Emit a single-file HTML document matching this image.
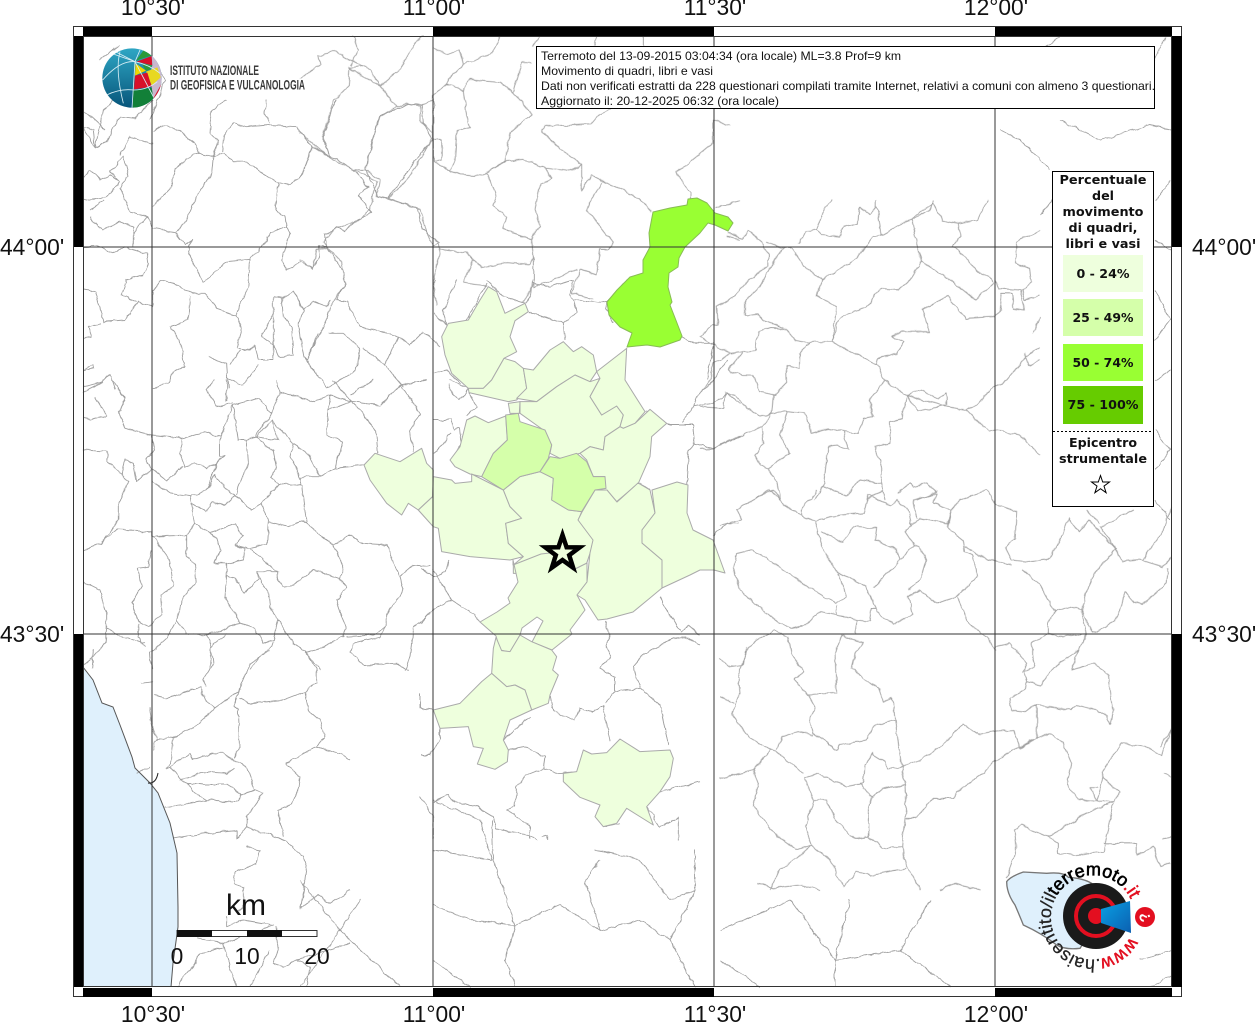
<!DOCTYPE html>
<html lang="it"><head><meta charset="utf-8"><title>Terremoto</title>
<style>html,body{margin:0;padding:0;background:#fff}svg{display:block}text{font-family:"Liberation Sans",sans-serif}.l text{font-family:"DejaVu Sans",sans-serif;font-weight:bold;font-size:12px;fill:#111}</style></head>
<body>
<svg width="1255" height="1024" viewBox="0 0 1255 1024" xmlns="http://www.w3.org/2000/svg">
<defs>
<clipPath id="gc"><circle cx="186" cy="174" r="89"/></clipPath>
<linearGradient id="gb" x1="0" y1="0" x2="0" y2="1"><stop offset="0" stop-color="#2ea6c4"/><stop offset="1" stop-color="#07557a"/></linearGradient>
<linearGradient id="mg" x1="0" y1="0" x2="1" y2="1"><stop offset="0" stop-color="#0aa0e4"/><stop offset="1" stop-color="#0b5fb0"/></linearGradient>
<path id="arc" d="M1130,937 A42,42 0 1 1 1133,905" fill="none"/>
<filter id="wig" filterUnits="userSpaceOnUse" x="0" y="0" width="1255" height="1024" color-interpolation-filters="sRGB">
<feTurbulence type="fractalNoise" baseFrequency=".11" numOctaves="2" seed="4" result="n"/>
<feDisplacementMap in="SourceGraphic" in2="n" scale="4.5" xChannelSelector="R" yChannelSelector="G"/>
<feGaussianBlur stdDeviation=".3"/>
</filter>
<filter id="sft" filterUnits="userSpaceOnUse" x="0" y="0" width="1255" height="1024" color-interpolation-filters="sRGB"><feGaussianBlur stdDeviation=".3"/></filter>
</defs>
<rect width="1255" height="1024" fill="#fff"/>
<polygon points="83,667 93,680 102,703 113,707 120,725 132,757 135,768 150,783 158,793 170,823 177,853 178,907 178,927 173,963 171,987 83,987" fill="#dff0fc"/>
<g fill="none" stroke="#a0a0a0" stroke-width="2.8" stroke-linejoin="round" filter="url(#wig)">
<g transform="translate(70,100) scale(.33333)"><path d="M248,95,285,75,330,95,375,130,388,160,430,170,460,160,490,185,530,185,570,215,625,248,660,255,695,228,725,140,680,80,600,75,530,80,490,70,460,110,455,155M388,160,345,175,315,215,300,265,248,320M430,170,425,220,380,290,345,370,315,395,248,385,232,350,180,335,150,265,175,225,160,170,120,215,150,245,110,290,60,300,42,295M625,248,615,330,645,350,650,380,600,400,575,440,540,478,470,485,400,545,360,470,355,440,368,420,345,435,315,395M650,380,660,400,635,480,650,510,690,485,730,505,750,470,745,437,770,440,765,405,800,380,825,395,850,365,905,340,865,285,895,260,850,210,800,175,780,170,730,140M780,170,760,115,785,30,800,0M770,440,820,515,825,555,800,600,830,605,870,680,960,700,985,710,1020,735,1060,695,1090,720,1110,740M540,478,535,560,500,645,440,625,405,580,370,580,310,550,275,540,248,575,248,620,205,605,165,660,100,665,95,640,75,575,42,570M500,645,515,690,500,745,540,750,555,735,565,780,610,780,610,590,635,595,670,575,700,625,730,605,770,620,780,600M635,595,640,650,665,680,670,765,625,770,610,735,575,710,610,640M670,575,700,630,685,680,700,770,710,780,770,660,780,620M710,780,745,700M775,700,820,700,870,745,860,810,770,865,740,820,700,770M985,710,945,795,880,745M945,795,1000,860M1090,120,1060,70,1055,15,1015,10,980,30,930,45,885,205,925,290,955,295,1040,325,1060,390,1110,430M955,295,1060,150,1090,120M42,230,60,210,90,240,120,225,150,245M75,145,100,30,130,0M75,145,40,80M42,85,70,85,75,145,110,125,150,50,195,55,248,0M150,165,180,110,248,130M60,330,105,300M60,350,95,390,150,365,190,380,190,440M232,350,190,400M42,440,80,437,130,460,160,440,230,460,235,490,220,525,170,540,155,585,200,605M90,670,55,680,65,710,42,715M360,590,355,660,300,680,330,720,345,800,310,815,295,850,250,865M415,770,470,790,475,865M480,795,510,750M565,795,520,855,470,835M42,810,70,795,72,805,42,812M42,860,100,845,120,825,135,870M420,100,425,30,470,0M420,100,445,125,430,170M590,0,585,40,600,70"/></g>
<g transform="translate(700,200) scale(.33333)"><path d="M85,100,130,115,145,92,185,125,205,165,205,195,135,250,105,290,50,320,55,375,40,372,0,410,40,435,95,460,165,450,175,395,215,382,260,390,285,420,330,428,300,460,298,505,258,495,260,550,225,585,180,575,160,525,125,525,85,510,130,455M250,145,215,195,180,260,135,305,135,345,170,340,190,362,250,385M250,145,200,125M250,145,275,145,310,195,365,240,350,285,410,322,395,425,345,425,330,428M365,240,400,220,470,175,520,110,545,105,635,55,655,155,665,185,630,240,595,270,540,265,500,320,430,345,410,375,395,425M295,130,320,95,350,90,365,105,420,110,430,80,475,70,480,20,505,45,530,20,545,105M530,20,530,0M350,90,375,20,395,0M635,55,700,10,725,60,775,70,780,110,755,140,775,150,830,215,875,235,880,250,825,300,760,245,665,185M775,70,830,60,865,0M395,425,530,495,555,540,620,588,740,620,800,630,865,695,885,690,960,705,1020,765M530,495,535,475,590,460,615,425,575,410,610,395,690,395,665,330,740,290,800,355,880,350,900,335,905,280,935,280,940,325,975,330,960,270,895,265,885,240M800,630,830,615,880,560,920,540,980,470,1020,440M975,460,985,495,1020,480M555,540,510,600,520,650,490,655,475,700,430,695,385,685,335,700,315,640,260,635,215,640,220,585M620,588,655,635,740,615,740,580,715,595,660,570,620,588M620,588,605,655,570,665,570,730,525,740,545,800,545,850,480,840,440,885,370,860,385,740,410,735,445,750,430,695M215,640,185,680,130,705,90,720,40,745,0,748M185,680,190,730,165,765,180,795,205,805,270,760,240,705,262,635M215,640,180,650,140,625,105,585,75,578,70,625,0,620M205,805,230,850,240,900M170,895,210,870,240,900M340,900,370,860M545,850,555,900M500,900,550,870M590,880,630,850,640,860,680,850,710,875,650,900M90,460,40,490,30,540,0,580M950,125,945,190,990,205,995,245,965,270,975,300,1020,285M950,125,1020,90M1000,400,1020,350M700,0,690,30,640,55"/></g>
<g transform="translate(720,490) scale(.33333)"><path d="M0,105,65,90,50,60,100,30,160,0,190,45,245,75,285,95,305,170,350,245,440,290,465,350,485,380,520,405,580,370,565,320,600,300,650,340,710,320,770,260,760,195,735,185,730,150,680,110,695,60,720,30,800,0,825,40,890,65,885,150,855,170,875,210,920,215,990,205,1020,150,1045,85,1075,125,1105,90,1185,175,1205,215,1260,210,1330,230,1355,200M100,180,50,190,40,235,60,300,80,320,180,400,215,415,260,405,300,365,350,375,410,390,408,430M100,180,190,240,270,295,345,340,380,320,355,250M350,345,350,375,410,390,450,395,455,355,470,355M285,95,330,80,430,70,445,15,510,45,530,30,565,60,575,105,555,125,575,155,580,165,540,210,460,295M305,125,370,160,400,110,470,115,465,150,530,180,540,210M245,75,245,60,290,0M575,100,600,85,680,100,695,60,640,40,650,10,580,30,590,85M580,165,600,170,620,210,600,270,565,300M710,320,745,400,800,440,825,480M735,170,800,205,875,225M905,235,960,285,1005,365,1050,350,1085,360,1120,430,1185,395,1200,360,1215,305,1240,335,1265,345,1340,280,1345,235M1085,360,1100,300,1130,240,1185,180M1005,365,985,395,985,430,1030,440,1100,430,1085,365M985,430,935,460,935,500,945,530,910,545,920,575,960,585,1000,535,1050,500,1075,480,1100,430M1075,480,1055,540,1120,520,1165,555,1175,630,1180,660,1170,705,1160,680,1130,660,1070,645,1050,660,950,645,915,665,875,660,870,625,915,600,920,575M950,645,950,745,900,775,880,720,825,725,775,735,730,700,660,770,600,810,545,830,500,835,495,815,455,790,435,830,430,880,380,890,345,875,295,850,255,865,280,930,320,930,345,990,405,1045,445,1040,445,960,455,925,420,880M545,830,520,650,515,625,490,635,480,600,395,535,405,490,430,460,365,435,345,490,350,610,265,615,285,650,270,680,280,730,350,780,355,765,440,750,460,710,525,690M265,615,225,570,250,545,215,490,205,440,160,420,85,470,55,560,60,610,35,670,90,745,150,780,100,840,0,865M150,780,170,785,250,850M170,780,185,740,235,725,280,735M100,840,115,880,100,945,150,1020,230,1080,275,1065,255,1010,280,930M455,925,490,895,555,885,545,830M555,885,558,960,545,1070,550,1110,580,1160,600,1200M445,1040,490,1075,545,1070M275,1065,330,1110,370,1190,410,1145,450,1155,560,1135M150,1200,180,1135,230,1105,275,1065M558,985,585,985,640,925,700,925,710,905,790,850,825,810,950,745,990,730,1030,760,1055,820,1040,885,1070,925,1120,935,1180,935,1200,905,1150,865,1145,845,1205,760,1275,770,1325,795,1355,710M0,510,30,530,70,525,80,470M0,620,40,640M825,470,870,460,920,520,905,550M1150,865,1130,935,1110,890,1135,890M1180,935,1080,980,985,1040,1015,1060,1015,1090,1070,1095,1150,1085,1180,940M985,1040,905,1005,885,1020,890,1070,870,1140,860,1165M1150,1060,1250,1060,1250,1095,1300,1070,1320,1130,1350,1120M1330,1045,1355,1040M1355,50,1330,120,1280,190,1270,210M1140,110,1240,60M1140,110,1190,180M1100,60,1140,100M1320,770,1355,710M1330,850,1355,860M115,1180,160,1195,240,1185,300,1200M660,1200,700,1180,780,1200"/></g>
<g transform="translate(80,380) scale(.33333)"><path d="M10,35,70,5M45,50,80,105,30,120,10,115M95,0,135,55,115,95,135,145,215,165,310,175,375,155,420,170,420,230,435,225,410,250,380,265,345,250,315,260,300,220,310,175M215,165,225,210,195,240,215,265,260,300,310,260M10,210,85,215,80,245,125,280,135,240,160,250,170,305,215,265M125,280,145,305,115,380,115,420,65,490,10,510M65,485,110,450,215,455,215,470,320,465,345,430,335,370,330,350,270,340,215,305M330,350,380,330,410,250M335,370,380,395,395,365,435,375,465,345,430,320,405,285,380,330M465,345,515,390,545,370,595,312,665,318,680,430,760,495,810,465,850,490,920,495,960,590,1000,555,1050,560M420,170,460,75,465,120,475,180,500,180,525,170,575,100,535,55,460,75M575,100,600,40,590,0M600,35,700,65,750,45,745,90,740,165,785,185,765,265,720,290,665,290,660,318M750,45,815,65,890,155,895,220,855,255,765,265M460,70,410,80,380,30,400,0M440,0,440,65M500,180,505,245,475,320,470,345M525,170,595,180,575,120,530,170M525,170,580,215,590,265,570,290,595,310M575,120,640,190,630,230,665,300M640,190,680,215,720,290M745,90,810,65,900,75,960,15,1020,100,990,155,1000,215M815,65,760,0M880,0,810,45M960,15,1040,0M345,430,410,475,420,510,405,550,440,550,490,540,495,505,465,495,490,465,465,430,390,460,410,475M470,495,510,505,560,490,565,425,545,370M565,425,625,440,660,425,680,430M510,505,590,575,590,590,610,620,640,615,700,570,780,595,800,620,770,660,785,710,800,745,790,770,730,800,680,815,640,790,595,715,570,680,565,630,545,610,530,575,595,575M530,575,535,600,490,640,480,610,440,585,440,550M440,585,435,650,480,730,525,745,550,790,580,780,595,715M760,495,790,560,780,595M960,590,970,630,920,700,920,740,880,765,800,770M215,465,270,540,280,620,240,645,245,700,210,740,175,725,155,670,185,620,175,565,205,560,215,510M320,465,320,525,345,550,350,605,310,650,290,720,320,760,380,765,480,730M290,720,260,775,210,820,215,870M175,730,175,770,195,800M10,605,60,630,80,700,80,745,125,770,195,790M80,745,75,790,40,830,10,855M380,765,395,800,390,860M395,800,440,760M1000,740,990,830,975,870M1000,740,1050,700M820,790,810,815,850,855,950,850,985,870M675,815,720,870M510,870,540,830,575,800,580,785M820,790,900,770,920,740"/></g>
<g transform="translate(300,36) scale(.33333)"><path d="M400,40,440,55,480,40,490,85,445,130,440,145,490,165,510,130,600,140,640,170,695,235,630,290,615,375,560,410,550,420,480,415,450,405,400,375,400,290,360,255,360,210,400,195M440,145,400,180,400,375M490,165,500,240,510,275,470,285,465,375,450,405M560,410,620,375,670,370,735,395,810,405,845,385,845,465,875,420,905,435,1000,475,1055,525M845,385,780,340,725,285,735,270,870,265,895,235,945,215M735,395,755,430,720,445,705,520,720,570,695,610,610,580,620,545,580,510,590,480,560,410M695,610,700,660,690,685,620,680,545,695,520,670,500,650,420,640,415,620,400,630,380,590,360,520,265,490,330,420,395,310M265,490,230,480,240,430,195,400,160,400,230,435,210,520,180,550,100,580,70,620,80,630,125,680,135,750,90,810M395,310,425,310,425,370,405,375M90,365,70,300,100,195,145,150,150,95,185,90,105,45,55,60,60,85,0,130M145,95,240,150,290,215,320,200,360,210M290,215,240,240,195,400M90,365,160,400M90,365,35,330,5,420M0,290,90,365M240,150,300,100,345,20,370,0M240,150,210,100,185,90M160,0,175,40,150,90M640,170,665,80,695,80M600,0,580,50,490,85M1130,410,1170,470,1170,490M1130,410,1240,320,1240,250M1240,250,1290,270M1245,515,1320,495M860,520,880,480,905,440M860,520,940,620,920,640,900,640,890,715,840,700,815,770,880,790M700,660,700,755,830,700M700,740,670,800M520,670,490,740,560,750M420,640,400,730,410,810M80,635,50,640,40,700,0,670M1280,600,1320,610M700,30,720,0M890,0,885,30M1030,0,1030,30"/></g>
<g transform="translate(70,650) scale(.33333)"><path d="M250,135,290,145,390,110,405,150,435,175,510,120M490,165,510,110,540,40,600,0M435,175,405,205,370,235,310,260,255,272,248,300M310,260,300,340,290,358,360,310,370,330,430,310,460,310,490,330,530,350,555,420,580,430,530,500,530,530,590,550,650,575,700,620,710,650,700,720,690,775,740,735,780,760,840,720M500,145,490,165,505,180,510,290,490,325M510,145,540,160,640,150,705,125,740,100,740,60,705,0M425,0,430,40,400,90,410,110M300,350,330,390,400,365,470,370,495,355M355,400,370,425,410,450,505,455,510,430,470,405,400,405,355,400,330,390M555,420,510,435M410,450,350,460,285,470M650,340,690,380,685,420,665,465,625,480,640,560M650,340,740,290,810,310,840,330M705,125,715,180,750,210,765,260,740,290M310,565,400,550,500,540,500,565,530,530M530,590,570,600,560,640,495,665,490,700,520,710,520,770,500,790M215,100,248,95M470,800,470,830,520,810,610,825M615,830,625,900,610,940,640,950,680,930,720,950,710,1010M680,930,700,925,840,880M460,880,500,1010M460,890,390,910,370,950,330,995,325,1010M380,865,460,880,610,825M240,170,248,230,260,270M240,350,200,370M65,55,70,0"/></g>
<g transform="translate(420,560) scale(.33333)"><path d="M40,30,95,120,165,165,180,185M0,190,35,150,95,120M0,25,40,50,75,35,85,0M40,450,0,445,0,400M60,505,60,540,30,585,0,585M250,540,330,470M265,570,320,560,375,590,370,625,320,645,290,680,285,740,260,750,330,800,330,840M370,625,410,640,470,635M390,405,400,455,465,480,480,445,520,455,550,435,570,545M555,430,585,395,660,385,720,435,745,555M585,395,585,350,540,325,575,290,555,255,570,235,555,180M660,385,640,320,675,280,760,235,795,230,840,255M780,220,805,195,840,225M720,110,780,215M0,710,40,770,40,840M40,725,85,705,105,725,170,740,220,770,230,810,310,820,350,840M365,830,380,825,380,840M680,740,720,800,775,770,775,840M720,695,840,665M550,800,600,790"/></g>
<g transform="translate(360,280) scale(.33333)"><path d="M220,100,260,135,250,95,290,0M225,0,220,35M380,10,320,120M380,0,430,50,500,70,510,45,515,0M515,10,570,20,640,0M505,95,610,130,650,95,640,60,630,40,640,0M640,60,720,70,740,65M610,130,615,180M760,130,740,90,740,65,770,35,800,0M270,300,325,325,300,360,280,345,265,310M325,338,350,380,320,410M220,280,260,270,300,310M220,420,275,420,280,450,300,445,305,480,280,540M270,460,245,500,220,520M965,170,1000,190,1060,190M855,395,925,435,1000,435,1005,490,985,510,980,615M1000,490,1060,505,1140,470M965,430,1000,380,1060,370,1100,340,1140,370M1000,380,1010,350,1060,300,1100,240M1060,200,1040,300M840,610,870,630M1060,765,1100,730,1140,730"/></g>
<path stroke-width=".9" d="M1000,80,1040,50,1060,37M1165,37,1150,70M1060,120,1100,140,1150,125,1171,130M1020,140,1050,170M1040,215,1052,200M1155,200,1171,180M1155,240,1171,250M1155,290,1170,320,1155,340M1155,380,1171,370M1155,430,1170,450,1155,470M1155,500,1171,520M1000,130,1020,140M492,820,493,860,515,925,505,960,515,987M595,850,640,860,670,900,695,890M515,925,560,905,600,930,640,920,670,940,695,987M600,860,585,880,600,930M695,850,695,890,670,940M433,800,480,820,492,860,433,850M433,905,470,920,515,925M433,960,470,987M720,930,790,900,835,960,835,987M850,900,835,960,900,950,950,987M900,950,930,900M720,960,760,987M300,880,340,930,300,987M360,900,340,930,400,987M250,987,270,950M1140,960,1171,950M1150,987,1171,975M83,110,105,130M120,45,100,60M152,60,165,80,150,120"/>
</g>
<g stroke="#aaa" stroke-width="1" stroke-linejoin="round" filter="url(#sft)">
<g fill="#eeffdd" transform="translate(360,280) scale(.33333)" stroke-width="3">
<polygon points="245,170 265,130 325,120 360,60 385,20 410,35 435,100 495,70 505,95 465,122 450,170 470,215 432,235 395,300 370,325 325,325 275,280 255,225"/>
<polygon points="432,235 465,245 490,265 500,325 470,360 445,365 327,338 325,325 370,325 395,300"/>
<polygon points="490,265 520,270 570,210 610,185 640,215 665,200 700,225 710,275 690,305 645,285 590,320 530,365 470,355 500,325"/>
<polygon points="480,365 530,365 590,320 645,285 690,305 720,295 690,350 725,405 770,378 790,405 780,440 735,470 730,510 690,500 660,520 600,535 570,520 575,495 550,450 480,400"/>
<polygon points="800,205 795,300 855,395 825,430 790,445 780,440 790,405 770,378 725,405 690,350 720,295 710,275"/>
<polygon points="445,370 480,365 478,400 450,400"/>
<polygon points="660,520 690,500 730,510 735,470 780,440 790,445 825,430 870,388 920,430 875,470 870,530 835,610 770,665 740,630 720,630 735,590 700,590 680,540"/>
<polygon points="270,540 300,500 320,420 345,408 385,428 437,408 442,480 400,520 365,590 330,582 285,560"/>
<polygon points="12,555 45,520 120,545 185,505 200,550 220,570 218,650 175,690 145,670 125,705 80,670 30,600"/>
<polygon points="175,690 218,650 220,740"/>
<polygon points="220,590 275,600 285,610 335,605 335,582 430,630 450,680 485,715 437,730 445,790 490,830 450,840 330,830 245,815 235,745 220,740 175,690 218,650"/>
<polygon points="430,630 480,590 540,575 580,595 575,660 625,690 665,695 655,720 700,780 690,820 680,850 680,880 460,880 460,855 490,830 445,790 437,730 485,715 450,680"/>
</g>
<g fill="#eeffdd">
<polygon points="513,560 518,582 508,598 510,603 497,612 480,622 496,636 500,650 510,652 520,635 522,628 537,617 543,621 532,642 552,650 572,634 570,630 585,610 577,595 587,582 587,563 573,570 550,553 541,554 513,565"/>
<polygon points="578,520 582,512 595,490 607,490 617,502 638,483 650,490 655,513 642,530 642,543 662,560 662,588 650,598 633,612 607,619 598,620 585,600 577,595 587,582 590,553 593,540"/>
<polygon points="652,490 677,482 688,485 687,513 693,530 713,540 725,573 714,570 700,570 690,575 662,588 662,560 642,543 642,530 655,513"/>
</g>
<g fill="#eeffdd" transform="translate(420,560) scale(.33333)" stroke-width="3">
<polygon points="228,232 245,272 270,275 300,225 335,245 395,270 410,290 398,330 415,345 390,405 385,430 335,450 315,390 285,375 260,380 215,340 220,265"/>
<polygon points="40,450 120,430 185,365 215,340 260,380 285,375 315,390 335,450 270,480 250,540 265,570 262,605 225,628 172,612 190,565 160,560 145,500 60,505"/>
<polygon points="430,640 470,635 490,570 515,582 560,578 600,537 660,575 750,570 760,595 750,650 720,695 680,740 700,795 620,745 590,790 550,800 525,770 540,735 480,712 430,665"/>
</g>
<g fill="#d5ffaa" transform="translate(360,280) scale(.33333)" stroke-width="3">
<polygon points="437,405 475,400 480,425 555,450 575,495 565,535 540,575 480,590 430,630 365,590 400,520 442,480"/>
<polygon points="540,575 570,530 600,535 650,520 680,545 700,590 735,590 738,625 705,630 665,695 625,690 575,660 580,595"/>
</g>
<polygon fill="#99ff33" stroke="#88bb55" points="653,212 670,208 687,205 688,199 697,198 707,203 715,213 728,217 733,223 728,231 715,225 708,223 700,233 685,247 679,258 678,267 669,273 668,287 672,302 670,305 677,323 682,336 680,340 660,347 647,345 627,347 632,333 620,327 609,315 607,302 617,290 630,277 643,273 643,260 650,247 649,233"/>
</g>
<polyline points="83,667 93,680 102,703 113,707 120,725 132,757 135,768 150,783 158,793 170,823 177,853 178,907 178,927 173,963 171,987" fill="none" stroke="#555" stroke-width="1"/>
<path d="M148,783 Q156,784 158,773" fill="none" stroke="#222" stroke-width="1"/>
<!-- graticule -->
<g stroke="#333" stroke-width="1.2" shape-rendering="crispEdges">
<path d="M152,37V987M433,37V987M714,37V987M995,37V987M83,247H1172M83,634H1172" fill="none"/>
</g>
<!-- frame -->
<rect x="73.5" y="26.5" width="1108" height="970" fill="none" stroke="#333"/>
<rect x="83.5" y="36.5" width="1088" height="950" fill="none" stroke="#333"/>
<g fill="#000">
<rect x="83" y="27" width="69" height="9"/><rect x="433" y="27" width="281" height="9"/><rect x="995" y="27" width="177" height="9"/>
<rect x="83" y="988" width="69" height="9"/><rect x="433" y="988" width="281" height="9"/><rect x="995" y="988" width="177" height="9"/>
<rect x="74" y="36" width="9" height="211"/><rect x="74" y="634" width="9" height="353"/>
<rect x="1172" y="36" width="10" height="211"/><rect x="1172" y="634" width="10" height="353"/>
</g>
<!-- scale -->
<g fill="#111">
<rect x="177" y="930.5" width="140" height="6" fill="#fff" stroke="#333"/>
<rect x="177" y="930" width="35" height="7"/><rect x="247" y="930" width="35" height="7"/>
<text x="246" y="915" font-size="30" text-anchor="middle">km</text>
<text x="177" y="964" font-size="22.8" text-anchor="middle">0</text>
<text x="247" y="964" font-size="22.8" text-anchor="middle">10</text>
<text x="317" y="964" font-size="22.8" text-anchor="middle">20</text>
</g>
<!-- tick labels -->
<g font-size="22.8" fill="#111">
<g text-anchor="middle">
<text x="153" y="15">10°30'</text><text x="434" y="15">11°00'</text><text x="715" y="15">11°30'</text><text x="996" y="15">12°00'</text>
<text x="153" y="1022">10°30'</text><text x="434" y="1022">11°00'</text><text x="715" y="1022">11°30'</text><text x="996" y="1022">12°00'</text>
</g>
<text x="0" y="255">44°00'</text><text x="0" y="642">43°30'</text>
<text x="1192" y="255">44°00'</text><text x="1192" y="642">43°30'</text>
</g>
<!-- star -->
<polygon transform="translate(562.5,553)" points="0,-18 4.1,-5.7 17.1,-5.6 6.7,2.2 10.6,14.6 0,7 -10.6,14.6 -6.7,2.2 -17.1,-5.6 -4.1,-5.7" fill="#eeffdd" stroke="#000" stroke-width="4.5" stroke-miterlimit="10"/>
<!-- info box -->
<rect x="536.5" y="46.5" width="618" height="62" fill="#fff" stroke="#000"/>
<g font-size="12" fill="#111">
<text x="541" y="60" textLength="360" lengthAdjust="spacingAndGlyphs">Terremoto del 13-09-2015 03:04:34 (ora locale) ML=3.8 Prof=9 km</text>
<text x="541" y="75" textLength="172" lengthAdjust="spacingAndGlyphs">Movimento di quadri, libri e vasi</text>
<text x="541" y="90" textLength="614" lengthAdjust="spacingAndGlyphs">Dati non verificati estratti da 228 questionari compilati tramite Internet, relativi a comuni con almeno 3 questionari.</text>
<text x="541" y="105" textLength="238" lengthAdjust="spacingAndGlyphs">Aggiornato il: 20-12-2025 06:32 (ora locale)</text>
</g>
<!-- legend -->
<g class="l">
<rect x="1052.5" y="171.5" width="101" height="335" fill="#fff" stroke="#000"/>
<rect x="1063" y="255" width="80" height="37" fill="#eeffdd"/>
<rect x="1063" y="299" width="80" height="37" fill="#d5ffaa"/>
<rect x="1063" y="344" width="80" height="37" fill="#99ff33"/>
<rect x="1063" y="386" width="80" height="38" fill="#66cc00"/>
<path d="M1053,431.5H1153" stroke="#000" stroke-dasharray="2,2" fill="none"/>
<g text-anchor="middle">
<text x="1103" y="184" textLength="87" lengthAdjust="spacingAndGlyphs">Percentuale</text>
<text x="1103" y="200" textLength="22" lengthAdjust="spacingAndGlyphs">del</text>
<text x="1103" y="216" textLength="81" lengthAdjust="spacingAndGlyphs">movimento</text>
<text x="1103" y="232" textLength="69" lengthAdjust="spacingAndGlyphs">di quadri,</text>
<text x="1103" y="248" textLength="75" lengthAdjust="spacingAndGlyphs">libri e vasi</text>
<text x="1103" y="278" textLength="53" lengthAdjust="spacingAndGlyphs">0 - 24%</text>
<text x="1103" y="322" textLength="61" lengthAdjust="spacingAndGlyphs">25 - 49%</text>
<text x="1103" y="367" textLength="61" lengthAdjust="spacingAndGlyphs">50 - 74%</text>
<text x="1103" y="409" textLength="71" lengthAdjust="spacingAndGlyphs">75 - 100%</text>
<text x="1103" y="447" textLength="68" lengthAdjust="spacingAndGlyphs">Epicentro</text>
<text x="1103" y="463" textLength="88" lengthAdjust="spacingAndGlyphs">strumentale</text>
</g>
<polygon transform="translate(1100.5,485)" points="0,-9.5 2.2,-3 9,-3 3.5,1.1 5.6,7.7 0,3.7 -5.6,7.7 -3.5,1.1 -9,-3 -2.2,-3" fill="#fff" stroke="#000" stroke-width="1"/>
</g>
<!-- INGV logo -->
<g transform="translate(70,20) scale(.33333)">
<circle cx="186" cy="174" r="89" fill="url(#gb)"/>
<g clip-path="url(#gc)">
<polygon points="198,122 225,85 250,105" fill="#2a9a3a"/>
<polygon points="200,125 245,108 247,136 222,130" fill="#d8102a"/>
<polygon points="245,105 285,150 285,220 250,240 240,165 247,136" fill="#c9b8cf"/>
<polygon points="197,130 228,152 195,167" fill="#f0d800"/>
<polygon points="215,130 247,136 238,150 228,152" fill="#2a9a3a"/>
<polygon points="228,155 262,142 272,172 245,197" fill="#e8d820"/>
<polygon points="195,167 232,158 245,200 192,208" fill="#d8102a"/>
<polygon points="190,212 245,203 250,235 240,270 188,270" fill="#128038"/>
<polygon points="250,235 275,190 270,210 255,235" fill="#d8102a"/>
<g fill="none" stroke="#d8eef5" stroke-width="2.5">
<path d="M195,125 L186,264M195,125 L110,95M195,125 L140,97M195,125 L250,230M195,125 L210,90"/>
<path d="M98,180 Q150,120 195,125 Q240,135 270,160"/>
<path d="M110,225 Q150,205 192,210 Q230,210 262,185"/>
<path d="M150,95 Q135,150 160,250"/>
</g>
</g>
</g>
<g fill="#3a3a3a" font-size="14" font-weight="bold">
<text x="170" y="75" textLength="89" lengthAdjust="spacingAndGlyphs">ISTITUTO NAZIONALE</text>
<text x="170" y="89.5" textLength="135" lengthAdjust="spacingAndGlyphs">DI GEOFISICA E VULCANOLOGIA</text>
</g>
<!-- haisentito logo -->
<path transform="translate(1000,850) scale(.33333)" d="M20,95 Q30,80 70,66 L140,70 Q190,65 205,82 Q250,85 275,100 L300,200 L240,295 Q195,300 170,285 Q125,250 70,225 Q60,200 45,165 Q20,130 20,95Z" fill="#dff0fc" stroke="#777" stroke-width="4"/>
<circle cx="1096" cy="916" r="33" fill="#1a1a1a"/>
<circle cx="1096" cy="916" r="20" fill="none" stroke="#e30f20" stroke-width="4"/>
<circle cx="1096" cy="916" r="8" fill="#e30f20"/>
<polygon points="1101,909 1130,901 1131,933 1101,923" fill="url(#mg)"/>
<circle cx="1145" cy="917" r="10" fill="#e30f20"/>
<text x="1145" y="917" font-size="15" font-weight="bold" fill="#fff" text-anchor="middle" transform="rotate(-110 1145 917)" dy="5">?</text>
<text font-size="18" fill="#222" stroke="#222" stroke-width=".25"><textPath href="#arc" startOffset="0"><tspan fill="#e30f20" stroke="#e30f20" stroke-width=".5">www</tspan><tspan>.haisentito/il</tspan><tspan fill="#000" stroke="#000" stroke-width=".6">terremoto</tspan><tspan fill="#e30f20" stroke="#e30f20" stroke-width=".5">.it</tspan></textPath></text>
</svg>
</body></html>
